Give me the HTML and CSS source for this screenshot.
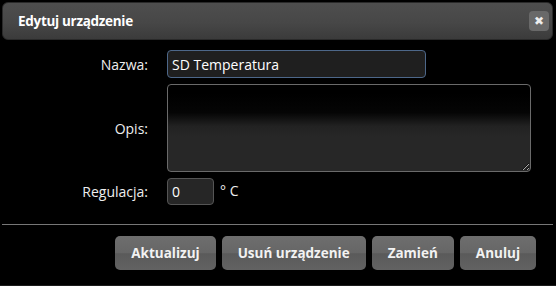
FILE: index.html
```html
<!DOCTYPE html>
<html lang="pl">
<head>
  <meta charset="UTF-8" />
  <title>Edytuj urządzenie</title>
  <link rel="stylesheet" href="styles.css">
</head>
<body>
  <div class="dialog">
    <div class="title-bar">
      <span class="title">Edytuj urządzenie</span>
      <button class="close-btn" title="Zamknij">&#x2716;</button>
    </div>

    <form class="edit-form">
      <label for="name">Nazwa:</label>
      <input type="text" id="name" class="name-input" value="SD Temperatura" />

      <label for="desc">Opis:</label>
      <textarea id="desc"></textarea>

      <label for="reg">Regulacja:</label>
      <div class="reg-field">
        <input type="text" id="reg" class="reg-input" value="0" />
        <span class="unit">° C</span>
      </div>
    </form>

    <div class="actions">
      <button class="btn">Aktualizuj</button>
      <button class="btn">Usuń urządzenie</button>
      <button class="btn">Zamień</button>
      <button class="btn">Anuluj</button>
    </div>
  </div>
</body>
</html>
```

FILE: styles.css
```css
* {
  margin: 0;
  padding: 0;
  box-sizing: border-box;
  font-family: "Open Sans", sans-serif;
}

body {
  background-color: #000;
  color: #eee;
}

.dialog {
  padding: 2px 3px 0 2px;
  height: 286px;
  border-bottom: 1px solid #1c1c1c;
}

.title-bar {
  height: 38px;
  display: flex;
  align-items: center;
  justify-content: space-between;
  padding: 0 3px 0 15px;
  border: 1px solid #2a2a2a;
  border-radius: 6px;
  background: linear-gradient(#4e4e4e, #474747 55%, #3b3b3b);
}

.title {
  font-size: 13.5px;
  font-weight: bold;
  color: #fff;
  letter-spacing: -0.3px;
}

.close-btn {
  width: 20px;
  height: 20px;
  border: none;
  border-radius: 4px;
  background: #696969;
  color: #eee;
  font-size: 12px;
  line-height: 20px;
  cursor: pointer;
}

.edit-form {
  display: grid;
  grid-template-columns: 146px 1fr;
  column-gap: 19px;
  row-gap: 6px;
  align-items: center;
  padding: 10px 22px 0 0;
}

.edit-form label {
  text-align: right;
  font-size: 14px;
  color: #eee;
}

input, textarea {
  font-size: 14px;
  color: #fff;
  border-radius: 4px;
  outline: none;
}

.name-input {
  width: 259px;
  height: 28px;
  padding: 0 4px;
  background: #1f1f1f;
  border: 1px solid #4d6789;
}

textarea {
  height: 88px;
  border: 1px solid #6a6a6a;
  background: linear-gradient(#000 10%, #050505 32%, #222 48%, #272727 60%, #272727);
  resize: vertical;
}

.reg-field {
  display: flex;
  align-items: flex-start;
  gap: 6px;
}

.reg-input {
  width: 47px;
  height: 27px;
  padding: 0 4px;
  background: #262626;
  border: 1px solid #555;
}

.unit {
  font-size: 14px;
  margin-top: 3px;
}

.actions {
  margin-top: 19px;
  border-top: 1px solid #777;
  display: flex;
  justify-content: flex-end;
  gap: 6px;
  padding: 11px 17px 0 0;
}

.btn {
  height: 34px;
  padding: 0 16px;
  border: none;
  border-radius: 5px;
  background: linear-gradient(#6e6e6e, #666 50%, #5a5a5a 52%, #626262);
  color: #f2f2f2;
  font-size: 13.5px;
  font-weight: bold;
  cursor: pointer;
}
```
